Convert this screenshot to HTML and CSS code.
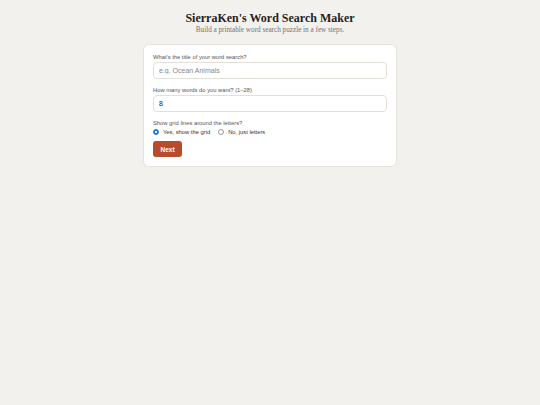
FILE: index.html
```html
<!DOCTYPE html>
<html>
<head>
<meta charset="utf-8">
<link rel="stylesheet" href="styles.css">
</head>
<body>
<header class="header">
  <h1 class="title">SierraKen's Word Search Maker</h1>
  <p class="subtitle">Build a printable word search puzzle in a few steps.</p>
</header>
<main class="card">
  <div class="field">
    <label class="label">What's the title of your word search?</label>
    <input class="input" type="text" placeholder="e.g. Ocean Animals">
  </div>
  <div class="field">
    <label class="label">How many words do you want? (1–28)</label>
    <input class="input" type="text" value="8">
  </div>
  <div class="field field-last">
    <span class="label">Show grid lines around the letters?</span>
    <div class="radios">
      <label class="radio"><input type="radio" name="grid" checked><span>Yes, show the grid</span></label>
      <label class="radio"><input type="radio" name="grid"><span>No, just letters</span></label>
    </div>
  </div>
  <button class="btn">Next</button>
</main>
</body>
</html>
```
FILE: styles.css
```css
html, body {
  margin: 0;
  padding: 0;
  background: #f3f1ed;
}
body {
  font-family: "Liberation Sans", Arial, sans-serif;
  color: #222;
}
.header {
  text-align: center;
  padding-top: 11px;
}
.title {
  margin: 0;
  font-family: "Liberation Serif", "Times New Roman", serif;
  font-weight: bold;
  font-size: 12px;
  line-height: 14px;
  color: #1f1f1f;
}
.subtitle {
  margin: 1px 0 0;
  font-family: "Liberation Serif", "Times New Roman", serif;
  font-size: 7.2px;
  line-height: 9px;
  color: #727272;
}
.card {
  width: 254px;
  box-sizing: border-box;
  margin: 9px auto 0;
  background: #fff;
  border: 1px solid #e6e3dd;
  border-radius: 6px;
  padding: 9px 9px 9px;
  display: flex;
  flex-direction: column;
  align-items: flex-start;
}
.field {
  display: flex;
  flex-direction: column;
  align-self: stretch;
  margin-bottom: 8px;
}
.field-last {
  margin-bottom: 6px;
}
.label {
  font-size: 5.8px;
  line-height: 7px;
  color: #555;
  margin-bottom: 1px;
}
.input {
  box-sizing: border-box;
  height: 17px;
  border: 1px solid #e3e0da;
  border-radius: 4px;
  padding: 0 5px;
  font-family: "Liberation Sans", Arial, sans-serif;
  font-size: 7px;
  color: #222;
  background: #fff;
  outline: none;
}
.input::placeholder {
  color: #888;
}
.radios {
  display: flex;
  gap: 8px;
  margin-top: 1px;
}
.radio {
  display: flex;
  align-items: center;
  gap: 4px;
  font-size: 5.8px;
  color: #333;
}
.radio input {
  appearance: none;
  -webkit-appearance: none;
  margin: 0;
  width: 6px;
  height: 6px;
  box-sizing: border-box;
  border: 1px solid #9a9a9a;
  border-radius: 50%;
  background: #fff;
}
.radio input:checked {
  border: 1px solid #1a73e8;
  background: radial-gradient(circle, #fff 0 0.8px, #1a73e8 1.2px);
}
.btn {
  width: 29px;
  height: 16px;
  border: none;
  border-radius: 3px;
  background: #b94b2d;
  color: #fff;
  font-family: "Liberation Sans", Arial, sans-serif;
  font-weight: bold;
  font-size: 6.5px;
  padding: 0;
}
```
